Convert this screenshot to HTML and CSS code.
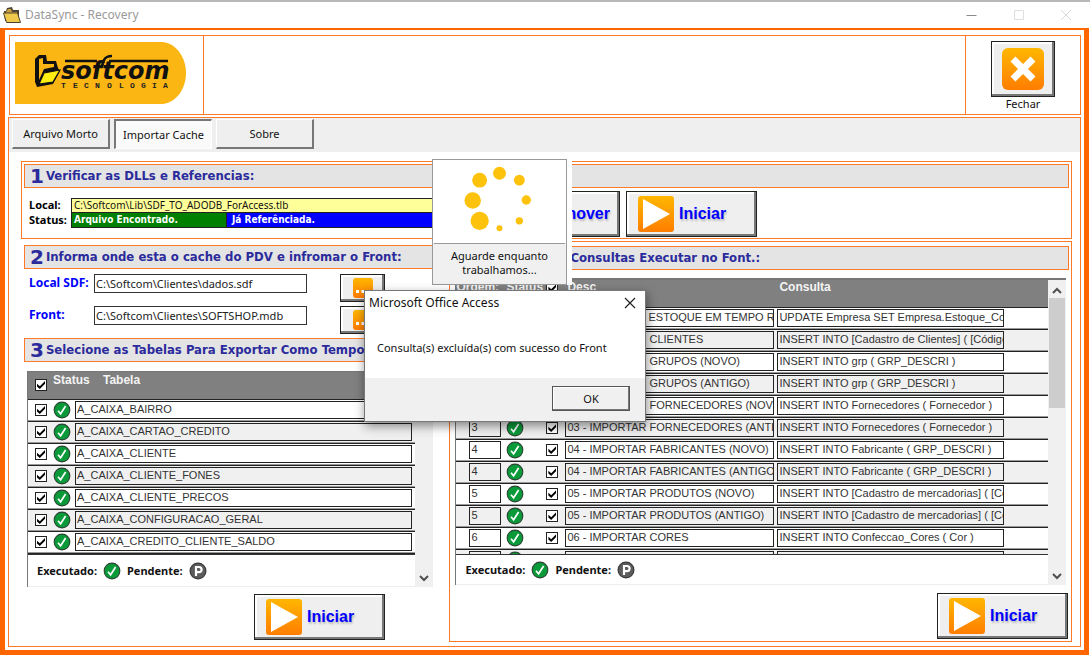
FILE: index.html
```html
<!DOCTYPE html>
<html lang="pt-BR">
<head>
<meta charset="utf-8">
<title>DataSync - Recovery</title>
<link rel="stylesheet" href="styles.css">
</head>
<body>
<svg class="defs" aria-hidden="true">
  <defs>
    <linearGradient id="amber" x1="0" y1="0" x2="0" y2="1">
      <stop offset="0" stop-color="#ffb700"/><stop offset="1" stop-color="#ff7d00"/>
    </linearGradient>
    <symbol id="ok" viewBox="0 0 18 18">
      <circle cx="9" cy="9" r="8.4" fill="#2f4436"/>
      <circle cx="9" cy="9" r="7.3" fill="#0a9a3a"/>
      <path d="M5 9.8 L7.6 12.8 L12.6 5" fill="none" stroke="#fff" stroke-width="1.7"/>
    </symbol>
    <symbol id="pend" viewBox="0 0 18 18">
      <circle cx="9" cy="9" r="8.5" fill="#3c3c3c"/>
      <circle cx="9" cy="9" r="7.3" fill="#5c5c5c"/>
      <path d="M7 14 V5 H10 A2.6 2.6 0 0 1 10 10.2 H7" fill="none" stroke="#fff" stroke-width="2.2"/>
    </symbol>
    <symbol id="play" viewBox="0 0 36 36">
      <rect width="36" height="36" rx="3" fill="url(#amber)"/>
      <path d="M5 3 L32 18 L5 33 Z" fill="#fff"/>
    </symbol>
    <symbol id="dots" viewBox="0 0 20 20">
      <rect width="20" height="20" rx="3" fill="url(#amber)"/>
      <path d="M3 12h3v3H3zM8.500 12h3v3h-3zM14 12h3v3h-3z" fill="#fff"/>
    </symbol>
    <symbol id="folder" viewBox="0 0 18 18">
      <path d="M1 5 L3 5 L4 2 L9 1 L10 4 L16 4 L16 15 L2 15 Z" fill="#4b4330"/>
      <path d="M3 6 L5 3 L8 3 L9 6 L14 6 L14 9 L3 9 Z" fill="#c8a040"/>
      <path d="M0.500 7 L14.500 7 L17.500 16.500 L3.500 16.500 Z" fill="#efc94c" stroke="#4b4330"/>
    </symbol>
    <symbol id="up" viewBox="0 0 10 8"><path d="M1 6 L5 2 L9 6" fill="none" stroke="#505050" stroke-width="2"/></symbol>
    <symbol id="down" viewBox="0 0 10 8"><path d="M1 2 L5 6 L9 2" fill="none" stroke="#505050" stroke-width="2"/></symbol>
  </defs>
</svg>

<div class="app">
  <header class="titlebar">
    <svg class="title-icon"><use href="#folder"/></svg>
    <span class="title-text">DataSync - Recovery</span>
    <div class="win-controls">
      <svg viewBox="0 0 12 12"><path d="M0.500 6.500 H10.500" stroke="#8a8a8a" fill="none"/></svg>
      <svg viewBox="0 0 12 12"><path d="M1.500 1.500 H10.500 V10.500 H1.500 Z" stroke="#dedede" fill="none"/></svg>
      <svg viewBox="0 0 12 12"><path d="M1 1 L11 11 M11 1 L1 11" stroke="#d8d8d8" fill="none"/></svg>
    </div>
  </header>

  <div class="frame">
    <div class="banner">
      <div class="banner-logo">
        <svg class="logo" viewBox="0 0 172 62" role="img" aria-label="softcom tecnologia">
          <path d="M0 0 H148 C162 2 171 16 171 31 C171 46 162 60 148 62 H0 Z" fill="#fcb614"/>
          <path d="M20 17 L24 13 L31 13 L32 19 L41 19 L43 26 L45 29 L38 42 L22 45 L20 40 Z" fill="#111"/>
          <path d="M24 17 L28 16 L28 22 L31 22 L39 22 L39 25 L29 27 L24 38 Z" fill="#fcb614"/>
          <path d="M24 42 L29 31 L45 28 L38 40 Z" fill="#ffee12" stroke="#111" stroke-width="1.200"/>
          <path d="M50 19 H82 M94 19 H153 M87 24 L89 18 Q91 14 97 14" fill="none" stroke="#111" stroke-width="2.600"/>
          <text class="logo-name" x="46" y="37">softcom</text>
          <text class="logo-sub" x="46 58 69 80 92 104 115 126 137 148" y="46">TECNOLOGIA</text>
        </svg>
      </div>
      <div class="banner-space"></div>
      <div class="banner-close">
        <button class="bevel close-btn" id="fechar" type="button" aria-label="Fechar">
          <svg viewBox="0 0 42 42"><rect width="42" height="42" rx="6" fill="url(#amber)"/><path d="M11 11 L31 31 M31 11 L11 31" stroke="#fff" stroke-width="7" fill="none"/></svg>
        </button>
        <label for="fechar">Fechar</label>
      </div>
    </div>

    <div class="content">
      <nav class="tabs">
        <button class="tab" type="button">Arquivo Morto</button>
        <button class="tab tab-active" type="button">Importar Cache</button>
        <button class="tab" type="button">Sobre</button>
      </nav>

      <main class="panel">
        <section class="step-one">
          <h2 class="heading"><b>1</b>Verificar as DLLs e Referencias:</h2>
          <div class="dll">
            <div class="dll-info">
              <span class="dll-label">Local:</span>
              <span class="dll-path">C:\Softcom\Lib\SDF_TO_ADODB_ForAccess.tlb</span>
              <span class="dll-label">Status:</span>
              <span class="dll-status"><span class="found">Arquivo Encontrado.</span><span class="ref">Já Referênciada.</span></span>
            </div>
            <button class="bevel action action-end" type="button">Remover</button>
            <button class="bevel action" type="button"><svg><use href="#play"/></svg>Iniciar</button>
          </div>
        </section>

        <div class="columns">
          <section class="left">
            <h2 class="heading"><b>2</b>Informa onde esta o cache do PDV e infromar o Front:</h2>
            <div class="paths">
              <label for="sdf">Local SDF:</label>
              <input id="sdf" type="text" value="C:\Softcom\Clientes\dados.sdf">
              <button class="bevel browse" type="button" aria-label="Procurar SDF"><svg><use href="#dots"/></svg></button>
              <label for="front">Front:</label>
              <input id="front" type="text" value="C:\Softcom\Clientes\SOFTSHOP.mdb">
              <button class="bevel browse" type="button" aria-label="Procurar Front"><svg><use href="#dots"/></svg></button>
            </div>
            <h2 class="heading"><b>3</b>Selecione as Tabelas Para Exportar Como Tempo</h2>

            <div class="subform subform-left">
              <div class="list">
                <div class="rows">
                  <table class="grid grid-tables">
                    <thead><tr><th class="c-check"><input type="checkbox" checked aria-label="Todas"></th><th class="c-icon">Status</th><th class="c-name">Tabela</th></tr></thead>
                    <tbody>
                      <tr><td><input type="checkbox" checked aria-label="A_CAIXA_BAIRRO"></td><td><svg><use href="#ok"/></svg></td><td><span>A_CAIXA_BAIRRO</span></td></tr>
                      <tr><td><input type="checkbox" checked aria-label="A_CAIXA_CARTAO_CREDITO"></td><td><svg><use href="#ok"/></svg></td><td><span>A_CAIXA_CARTAO_CREDITO</span></td></tr>
                      <tr><td><input type="checkbox" checked aria-label="A_CAIXA_CLIENTE"></td><td><svg><use href="#ok"/></svg></td><td><span>A_CAIXA_CLIENTE</span></td></tr>
                      <tr><td><input type="checkbox" checked aria-label="A_CAIXA_CLIENTE_FONES"></td><td><svg><use href="#ok"/></svg></td><td><span>A_CAIXA_CLIENTE_FONES</span></td></tr>
                      <tr><td><input type="checkbox" checked aria-label="A_CAIXA_CLIENTE_PRECOS"></td><td><svg><use href="#ok"/></svg></td><td><span>A_CAIXA_CLIENTE_PRECOS</span></td></tr>
                      <tr><td><input type="checkbox" checked aria-label="A_CAIXA_CONFIGURACAO_GERAL"></td><td><svg><use href="#ok"/></svg></td><td><span>A_CAIXA_CONFIGURACAO_GERAL</span></td></tr>
                      <tr><td><input type="checkbox" checked aria-label="A_CAIXA_CREDITO_CLIENTE_SALDO"></td><td><svg><use href="#ok"/></svg></td><td><span>A_CAIXA_CREDITO_CLIENTE_SALDO</span></td></tr>
                    </tbody>
                  </table>
                </div>
                <div class="legend">Executado: <svg><use href="#ok"/></svg> Pendente: <svg><use href="#pend"/></svg></div>
              </div>
              <div class="scroll"><svg><use href="#up"/></svg><i></i><svg><use href="#down"/></svg></div>
            </div>
            <div class="actions actions-left"><button class="bevel action" type="button"><svg><use href="#play"/></svg>Iniciar</button></div>
          </section>

          <section class="right">
            <h2 class="heading heading-right">Consultas Executar no Font.:</h2>
            <div class="subform subform-right">
              <div class="list">
                <div class="rows">
                  <table class="grid grid-queries">
                    <thead><tr><th class="c-order">Ordem:</th><th class="c-status">Status</th><th class="c-pick"><input type="checkbox" checked aria-label="Todas"></th><th class="c-desc">Desc</th><th class="c-query">Consulta</th><th></th></tr></thead>
                    <tbody>
                      <tr><td><span>0</span></td><td><svg><use href="#ok"/></svg></td><td><input type="checkbox" checked aria-label="00"></td><td><span>00 - HABILITAR ESTOQUE EM TEMPO REAL</span></td><td><span>UPDATE Empresa SET Empresa.Estoque_Controle</span></td><td></td></tr>
                      <tr><td><span>1</span></td><td><svg><use href="#ok"/></svg></td><td><input type="checkbox" checked aria-label="01"></td><td><span>01 - IMPORTAR CLIENTES</span></td><td><span>INSERT INTO [Cadastro de Clientes] ( [Código]</span></td><td></td></tr>
                      <tr><td><span>2</span></td><td><svg><use href="#ok"/></svg></td><td><input type="checkbox" checked aria-label="02 novo"></td><td><span>02 - IMPORTAR GRUPOS (NOVO)</span></td><td><span>INSERT INTO grp ( GRP_DESCRI )</span></td><td></td></tr>
                      <tr><td><span>2</span></td><td><svg><use href="#ok"/></svg></td><td><input type="checkbox" checked aria-label="02 antigo"></td><td><span>02 - IMPORTAR GRUPOS (ANTIGO)</span></td><td><span>INSERT INTO grp ( GRP_DESCRI )</span></td><td></td></tr>
                      <tr><td><span>3</span></td><td><svg><use href="#ok"/></svg></td><td><input type="checkbox" checked aria-label="03 novo"></td><td><span>03 - IMPORTAR FORNECEDORES (NOVO)</span></td><td><span>INSERT INTO Fornecedores ( Fornecedor )</span></td><td></td></tr>
                      <tr><td><span>3</span></td><td><svg><use href="#ok"/></svg></td><td><input type="checkbox" checked aria-label="03 antigo"></td><td><span>03 - IMPORTAR FORNECEDORES (ANTIGO)</span></td><td><span>INSERT INTO Fornecedores ( Fornecedor )</span></td><td></td></tr>
                      <tr><td><span>4</span></td><td><svg><use href="#ok"/></svg></td><td><input type="checkbox" checked aria-label="04 novo"></td><td><span>04 - IMPORTAR FABRICANTES (NOVO)</span></td><td><span>INSERT INTO Fabricante ( GRP_DESCRI )</span></td><td></td></tr>
                      <tr><td><span>4</span></td><td><svg><use href="#ok"/></svg></td><td><input type="checkbox" checked aria-label="04 antigo"></td><td><span>04 - IMPORTAR FABRICANTES (ANTIGO)</span></td><td><span>INSERT INTO Fabricante ( GRP_DESCRI )</span></td><td></td></tr>
                      <tr><td><span>5</span></td><td><svg><use href="#ok"/></svg></td><td><input type="checkbox" checked aria-label="05 novo"></td><td><span>05 - IMPORTAR PRODUTOS (NOVO)</span></td><td><span>INSERT INTO [Cadastro de mercadorias] ( [Código]</span></td><td></td></tr>
                      <tr><td><span>5</span></td><td><svg><use href="#ok"/></svg></td><td><input type="checkbox" checked aria-label="05 antigo"></td><td><span>05 - IMPORTAR PRODUTOS (ANTIGO)</span></td><td><span>INSERT INTO [Cadastro de mercadorias] ( [Código]</span></td><td></td></tr>
                      <tr><td><span>6</span></td><td><svg><use href="#ok"/></svg></td><td><input type="checkbox" checked aria-label="06"></td><td><span>06 - IMPORTAR CORES</span></td><td><span>INSERT INTO Confeccao_Cores ( Cor )</span></td><td></td></tr>
                      <tr><td><span></span></td><td><svg><use href="#ok"/></svg></td><td></td><td><span></span></td><td><span></span></td><td></td></tr>
                    </tbody>
                  </table>
                </div>
                <div class="legend">Executado: <svg><use href="#ok"/></svg> Pendente: <svg><use href="#pend"/></svg></div>
              </div>
              <div class="scroll"><svg><use href="#up"/></svg><i class="thumb"></i><svg><use href="#down"/></svg></div>
            </div>
            <div class="actions actions-right"><button class="bevel action" type="button"><svg><use href="#play"/></svg>Iniciar</button></div>
          </section>
        </div>
      </main>
    </div>
  </div>

  <div class="wait-window">
    <div class="wait">
      <svg viewBox="0 0 134 83" fill="#fdc20c">
        <circle cx="67" cy="13" r="6.500"/><circle cx="87" cy="20" r="5.500"/><circle cx="94" cy="40" r="4.700"/>
        <circle cx="87" cy="61" r="3.700"/><circle cx="67" cy="68.500" r="3"/><circle cx="47" cy="61" r="9.200"/>
        <circle cx="40" cy="40.500" r="8.300"/><circle cx="47" cy="20" r="7.500"/>
      </svg>
      <p>Aguarde enquanto<br>trabalhamos...</p>
    </div>
  </div>

  <div class="dialog" role="dialog" aria-labelledby="dlg-title">
    <div class="dialog-head">
      <span id="dlg-title">Microsoft Office Access</span>
      <button class="dialog-x" type="button" aria-label="Close"><svg viewBox="0 0 12 12"><path d="M1 1 L11 11 M11 1 L1 11" stroke="#222" stroke-width="1.200" fill="none"/></svg></button>
    </div>
    <p class="dialog-msg">Consulta(s) excluída(s) com sucesso do Front</p>
    <div class="dialog-foot"><button class="dialog-ok" type="button">OK</button></div>
  </div>
</div>
</body>
</html>
```

FILE: styles.css
```css
* { box-sizing: border-box; }

:root {
  --orange: #ff6600;
  --line: #ff7a26;
  --navy: #2b2b9c;
  --ui: "Noto Sans", "Open Sans", sans-serif;
  --strong: "DejaVu Sans Condensed", "DejaVu Sans", sans-serif;
  --data: "Liberation Sans", Arial, sans-serif;
}

body {
  margin: 0;
  font-family: var(--ui);
  font-size: 11px;
  line-height: 14px;
  color: #111;
  background: #fff;
}

h2, p { margin: 0; }
button { font-family: inherit; font-size: inherit; line-height: inherit; padding: 0; color: inherit; }
svg { display: block; flex: none; }
.defs { position: absolute; width: 0; height: 0; }

.app {
  position: relative;
  display: flex;
  flex-direction: column;
  height: 100vh;
  min-height: 600px;
  overflow: hidden;
}

/* Window chrome */
.titlebar {
  display: flex;
  align-items: center;
  gap: 4px;
  height: 28px;
  padding: 0 18px 0 3px;
  border-top: 2px solid #b8b8b8;
}
.title-icon { width: 18px; height: 18px; }
.title-text { font-size: 12px; color: #999; }
.win-controls { display: flex; gap: 35px; margin-left: auto; }
.win-controls svg { width: 12px; height: 12px; }

.frame {
  flex: 1;
  display: flex;
  flex-direction: column;
  gap: 2px;
  min-height: 0;
  margin-right: 1px;
  padding: 5px 3px 3px;
  border: 5px solid var(--orange);
  border-top-width: 2px;
}

/* Banner */
.banner {
  display: flex;
  flex: none;
  height: 80px;
  margin-left: 1px;
  border: 1px solid var(--line);
}
.banner-logo { width: 194px; padding: 6px 5px; border-right: 1px solid var(--line); }
.logo { width: 172px; height: 62px; }
.logo-name { font: italic bold 24px "DejaVu Sans", sans-serif; fill: #111; }
.logo-sub { font: bold 8px "Liberation Mono", monospace; fill: #222; }
.banner-space { flex: 1; }
.banner-close {
  display: flex;
  flex-direction: column;
  align-items: center;
  width: 115px;
  padding-top: 5px;
  border-left: 1px solid var(--line);
}
.close-btn { width: 64px; height: 56px; }
.close-btn svg { width: 42px; height: 42px; }

.bevel {
  display: flex;
  align-items: center;
  justify-content: center;
  background: #efefef;
  border: 1px solid #222;
  box-shadow: inset -2px -2px #777, inset 2px 2px #fff;
}

/* Tabs */
.content {
  flex: 1;
  display: flex;
  flex-direction: column;
  min-height: 0;
  border: 1px solid var(--line);
}
.tabs { display: flex; flex: none; gap: 4px; height: 34px; padding: 1px 3px 3px; background: #efefef; }
.tab {
  width: 98px;
  background: #efefef;
  border: 1px solid #fff;
  border-right: 2px solid #777;
  border-bottom: 2px solid #777;
}
.tab-active { background: #fafafa; border: 2px solid #777; border-right: 1px solid #fff; border-bottom: 1px solid #fff; }

.panel { flex: 1; display: flex; flex-direction: column; gap: 2px; min-height: 0; padding: 9px 8px 4px 12px; }

.heading {
  display: flex;
  align-items: center;
  flex: none;
  gap: 2px;
  height: 24px;
  padding-left: 5px;
  overflow: hidden;
  white-space: nowrap;
  font: bold 13px/20px var(--strong);
  color: var(--navy);
  background: #e4e4e4;
  border: 1px solid var(--line);
}
.heading b { font: bold 20px/20px "DejaVu Sans", sans-serif; }
.heading-right { padding-left: 117px; }

/* Step 1 */
.step-one { flex: none; height: 78px; padding: 2px; border: 1px solid var(--line); }
.dll { display: flex; gap: 6px; padding: 3px 0 0 5px; }
.dll-info {
  display: grid;
  grid-template-columns: 42px minmax(0, 412px);
  grid-template-rows: 15px 15px;
  margin-top: 7px;
  font-size: 10px;
  line-height: 13px;
}
.dll-label { font-size: 11px; font-weight: bold; color: #000; }
.dll-path { padding-left: 2px; background: #ffff99; border: 1px solid #222; }
.dll-status { display: flex; font-family: var(--strong); font-weight: bold; color: #fff; border: 1px solid #222; border-top: 0; }
.found { width: 155px; padding-left: 2px; background: #008000; border-right: 1px solid #222; }
.ref { flex: 1; padding-left: 5px; background: #0000ff; }

.action {
  gap: 5px;
  width: 131px;
  height: 46px;
  justify-content: flex-start;
  padding-left: 11px;
  font: bold 16px/20px var(--data);
  color: #0000ff;
  text-shadow: 1px 2px 2px #bbb;
}
.action-end { justify-content: flex-end; padding-right: 9px; }
.action svg { width: 36px; height: 36px; }

/* Columns */
.columns {
  flex: 1;
  display: grid;
  grid-template-columns: minmax(0, 422fr) minmax(0, 622fr);
  gap: 6px;
  min-height: 0;
}
.left { display: flex; flex-direction: column; min-height: 0; padding: 4px 0 2px 3px; }
.right { display: flex; flex-direction: column; min-height: 0; padding: 4px 2px 2px; border: 1px solid var(--line); }

.paths {
  display: grid;
  grid-template-columns: 64px 213px 45px;
  grid-auto-rows: 28px;
  column-gap: 1px;
  row-gap: 4px;
  flex: none;
  padding: 5px 0 4px 5px;
}
.paths label { padding-top: 2px; font-size: 12px; font-weight: bold; color: #0000ff; }
.paths input {
  width: 213px;
  height: 19px;
  padding: 0 1px;
  font: 11px/16px var(--ui);
  color: #222;
  border: 1px solid #333;
}
.browse { width: 45px; margin-left: 32px; }
.browse svg { width: 20px; height: 20px; }

/* Subforms */
.subform { flex: 1; display: flex; min-height: 0; border-left: 1px solid #777; border-top: 1px solid #777; }
.subform-left { margin: 9px 10px 0 3px; }
.subform-right { margin: 8px 3px 0; border-top-width: 2px; }
.list { flex: 1; display: flex; flex-direction: column; min-width: 0; }
.rows { flex: 1 1 0; min-height: 0; overflow: hidden; border-bottom: 1px solid #333; }
.legend {
  display: flex;
  align-items: center;
  flex: none;
  gap: 6px;
  height: 32px;
  padding-left: 9px;
  font-weight: bold;
  border-bottom: 1px solid #eee;
}
.legend svg { width: 18px; height: 18px; }
.subform-right .legend { height: 30px; }

.scroll { display: flex; flex-direction: column; align-items: center; width: 18px; padding: 7px 0 5px; background: #f0f0f0; }
.scroll svg { width: 10px; height: 8px; }
.subform-left .scroll svg:first-child { visibility: hidden; }
.scroll i { flex: 1; }
.scroll .thumb { flex: 0 1 110px; width: 16px; margin: 3px 0 auto; background: #cdcdcd; }

.grid { width: 100%; table-layout: fixed; border-collapse: separate; border-spacing: 0; font: 11px/14px var(--data); color: #333; }
.grid th {
  height: 28px;
  padding: 0;
  text-align: left;
  vertical-align: top;
  font: bold 12px/14px var(--data);
  color: #f4f4f4;
  background: #808080;
  border-bottom: 1px solid #222;
}
.grid td { height: 22px; padding: 1px 3px 2px 0; border-bottom: 1px solid #222; box-shadow: inset 0 -1px #999; }
.grid tr:nth-child(even) td { background: #f0f0f0; }
.grid td span {
  display: block;
  height: 18px;
  padding-left: 1px;
  overflow: hidden;
  white-space: nowrap;
  border: 1px solid #222;
}
.grid td svg { width: 18px; height: 18px; }
.grid input { display: grid; width: 12px; height: 12px; margin: 0; appearance: none; background: #fff; border: 1px solid #222; }
.grid input::before {
  content: "";
  width: 8px;
  height: 8px;
  margin: 1px;
  background: #000;
  clip-path: polygon(0 35%, 35% 65%, 100% 0, 100% 35%, 35% 100%, 0 70%);
}
.grid-tables th { padding-top: 1px; }
.grid-tables .c-check { width: 25px; padding: 7px 0 0 7px; }
.grid-tables .c-icon { width: 50px; }
.grid-tables td:first-child { padding-left: 7px; }
.grid-tables td:last-child span { margin-left: -28px; }
.c-order { width: 48px; }
.c-status { width: 42px; }
.c-pick { width: 19px; }
.c-desc { width: 212px; }
.c-query { width: 230px; }
.grid-queries th { padding-left: 2px; }
.grid-queries .c-order { padding-left: 0; }
.grid-queries .c-pick { padding: 2px 0 0; }
.grid-queries td:first-child { padding-left: 13px; }
.grid-queries td:nth-child(2) { padding-left: 2px; }

.actions { display: flex; flex: none; }
.actions-left { padding: 7px 0 0 230px; }
.actions-right { justify-content: flex-end; padding: 8px 1px 0 0; }

/* Floating windows */
.wait-window { position: absolute; left: 432px; top: 159px; width: 140px; background: #fff; }
.wait { width: 135px; background: #f0f0f0; border: 1px solid #999; }
.wait svg { width: 100%; height: 83px; background: #fff; }
.wait p { height: 41px; margin: 0 1px; padding-top: 5px; text-align: center; border-top: 1px solid #999; }

.dialog {
  position: absolute;
  left: 364px;
  top: 290px;
  width: 282px;
  background: #fff;
  border: 1px solid #777;
  box-shadow: 1px 4px 10px rgba(0, 0, 0, 0.45);
}
.dialog-head { display: flex; justify-content: space-between; align-items: center; height: 24px; padding: 0 9px 0 4px; font-size: 12px; }
.dialog-x { background: none; border: 0; }
.dialog-x svg { width: 12px; height: 12px; }
.dialog-msg { height: 63px; padding: 26px 0 0 12px; }
.dialog-foot { display: flex; justify-content: flex-end; padding: 8px 15px 10px; background: #f0f0f0; }
.dialog-ok {
  width: 78px;
  height: 25px;
  background: #f0f0f0;
  border: 1px solid #555;
  box-shadow: inset -1px -1px #777, inset 1px 1px #fff;
}
```
